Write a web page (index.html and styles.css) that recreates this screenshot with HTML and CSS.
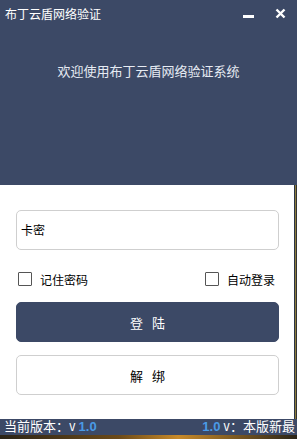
FILE: index.html
```html
<!DOCTYPE html>
<html lang="zh">
<head>
<meta charset="utf-8">
<link rel="stylesheet" href="styles.css">
</head>
<body>
<div class="app">
  <header class="header">
    <div class="titlebar">
      <span class="title">布丁云盾网络验证</span>
      <div class="controls">
        <svg class="icon-min" width="12" height="12" viewBox="0 0 12 12"><rect x="0" y="8" width="11" height="3" fill="#fff"/></svg>
        <svg class="icon-close" width="11" height="11" viewBox="0 0 11 11"><path d="M1.5 1.5 L9.5 9.5 M9.5 1.5 L1.5 9.5" stroke="#fff" stroke-width="2.4" fill="none"/></svg>
      </div>
    </div>
    <div class="welcome">欢迎使用布丁云盾网络验证系统</div>
  </header>
  <div class="middle">
    <main class="panel">
      <div class="input">卡密</div>
      <div class="options">
        <label class="check"><span class="box"></span>记住密码</label>
        <label class="check"><span class="box"></span>自动登录</label>
      </div>
      <button class="btn btn-primary">登 陆</button>
      <button class="btn btn-secondary">解 绑</button>
    </main>
    <div class="edge"></div>
  </div>
  <footer class="footer">
    <span>当前版本：<span class="v">V</span> <b class="ver">1.0</b></span>
    <span><b class="ver">1.0</b> <span class="v">V</span>：本版新最</span>
  </footer>
  <div class="bottom"></div>
</div>
</body>
</html>
```
FILE: styles.css
```css
html, body {
  margin: 0;
  padding: 0;
}
body {
  width: 297px;
  height: 439px;
  overflow: hidden;
  font-family: "Noto Sans CJK SC", "Microsoft YaHei", sans-serif;
  background: #1e2230;
}
.app {
  display: flex;
  flex-direction: column;
  height: 439px;
}
.header {
  background: #3c4966;
  height: 185px;
  display: flex;
  flex-direction: column;
  color: #fff;
}
.titlebar {
  display: flex;
  justify-content: space-between;
  align-items: center;
  height: 30px;
  padding: 0 11px 0 5px;
}
.title {
  font-size: 12px;
  line-height: 30px;
  margin-top: -3px;
}
.controls {
  display: flex;
  gap: 20px;
  align-items: center;
  margin-top: -4px;
}
.icon-min, .icon-close {
  display: block;
}
.welcome {
  margin-top: 32px;
  text-align: center;
  font-size: 13px;
  line-height: 18px;
  color: #e6ebf3;
}
.middle {
  display: flex;
  height: 234px;
}
.panel {
  flex: 1;
  background: #fff;
  padding: 25px 15px 0 16px;
  display: flex;
  flex-direction: column;
}
.edge {
  width: 3px;
  background: linear-gradient(to right, #2b3447 0, #2b3447 1px, #8a7a3a 1px, #8a7a3a 2px, #333 2px);
}
.input {
  height: 38px;
  border: 1px solid #cfcfcf;
  border-radius: 5px;
  box-sizing: content-box;
  font-size: 12px;
  line-height: 38px;
  padding-left: 4px;
  color: #000;
}
.options {
  display: flex;
  justify-content: space-between;
  align-items: center;
  margin-top: 21px;
  height: 16px;
  padding: 0 4px 0 2px;
}
.check {
  display: flex;
  align-items: center;
  font-size: 12px;
  color: #000;
}
.box {
  width: 12px;
  height: 12px;
  border: 1px solid #555;
  border-radius: 1px;
  margin-right: 8px;
  background: #fff;
}
.btn {
  height: 40px;
  border-radius: 5px;
  font-family: inherit;
  font-size: 13px;
  letter-spacing: 3px;
  text-indent: 3px;
  cursor: pointer;
  padding: 0;
}
.btn-primary {
  margin-top: 15px;
  background: #3c4966;
  color: #fff;
  border: 1px solid #3c4966;
}
.btn-secondary {
  margin-top: 13px;
  background: #fff;
  color: #000;
  border: 1px solid #cfcfcf;
}
.footer {
  height: 16px;
  background: #3c4966;
  color: #fff;
  display: flex;
  justify-content: space-between;
  align-items: center;
  padding: 0 2px 0 4px;
  font-size: 13px;
  line-height: 16px;
  white-space: nowrap;
}
.v {
  font-family: "DejaVu Sans Mono", monospace;
  font-size: 11px;
}
.ver {
  color: #4a9be6;
  font-family: "Liberation Sans", Arial, sans-serif;
  font-weight: bold;
  font-size: 13px;
}
.bottom {
  flex: 1;
  background: linear-gradient(to right, #2a2418, #6b4a1a 40%, #c88a2a 60%, #2a2418);
}
```
